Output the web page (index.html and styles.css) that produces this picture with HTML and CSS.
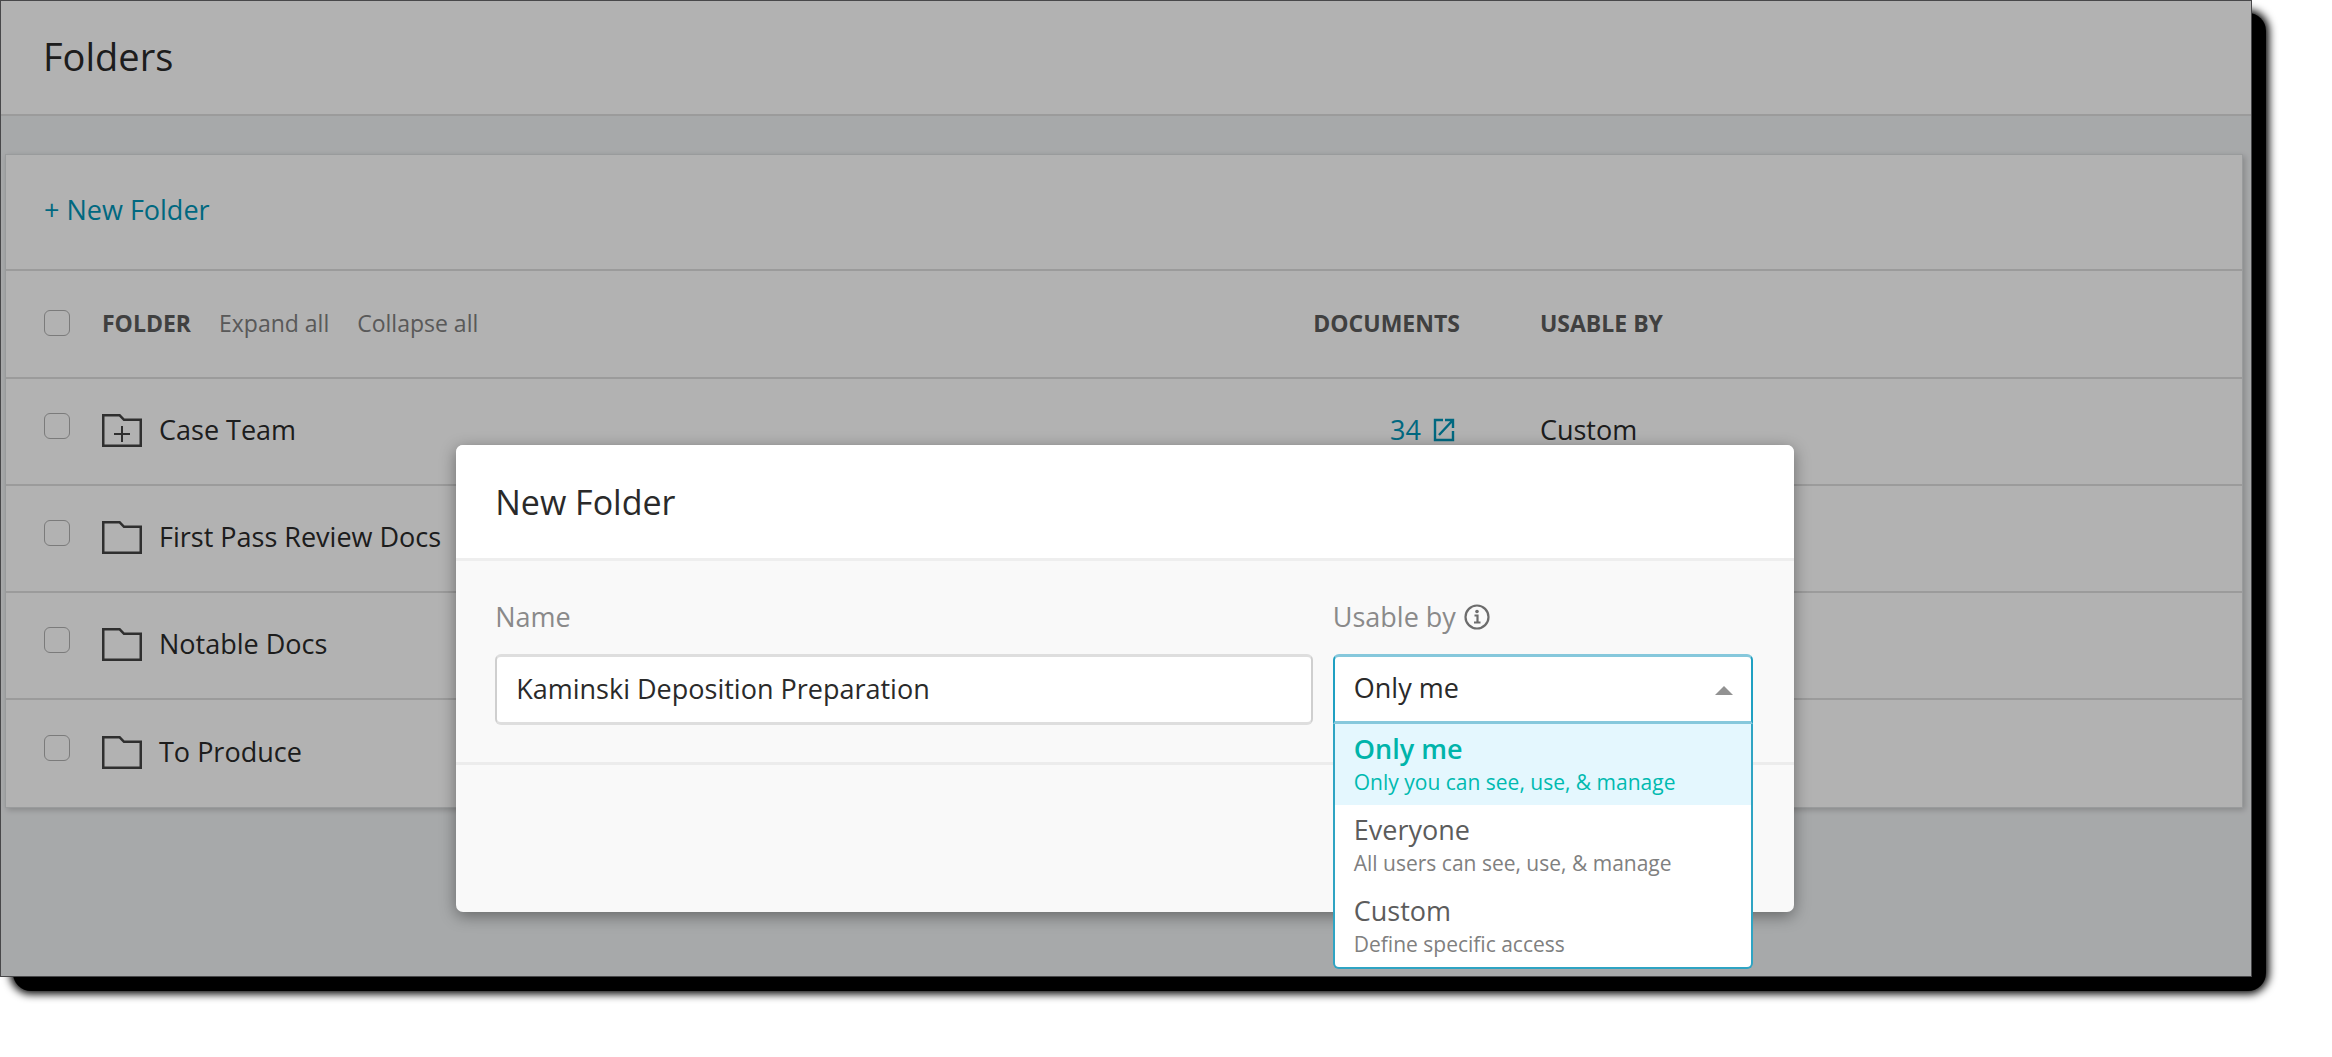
FILE: index.html
```html
<!DOCTYPE html>
<html lang="en">
<head>
<meta charset="UTF-8">
<meta name="viewport" content="width=device-width, initial-scale=1.0">
<title>Folders</title>
<link rel="stylesheet" href="styles.css">
</head>
<body>
<div class="window">
    <header class="page-header">
        <h1>Folders</h1>
    </header>

    <main class="card">
        <div class="toolbar">
            <a href="#" class="link">+ New Folder</a>
        </div>
        <table class="folders">
            <colgroup>
                <col class="col-check">
                <col class="col-folder">
                <col class="col-docs">
                <col class="col-usable">
            </colgroup>
            <thead>
                <tr>
                    <th class="check"><input type="checkbox" aria-label="Select all folders"></th>
                    <th>
                        <div class="head-folder">
                            <span>FOLDER</span>
                            <button type="button">Expand all</button>
                            <button type="button">Collapse all</button>
                        </div>
                    </th>
                    <th class="docs">DOCUMENTS</th>
                    <th>USABLE BY</th>
                </tr>
            </thead>
            <tbody>
                <tr>
                    <td class="check"><input type="checkbox" aria-label="Select Case Team"></td>
                    <td>
                        <div class="folder">
                            <svg class="folder-icon" viewBox="0 0 40 33"><path d="M1.2 1.2H17.5L22 5.8H38.8V31.8H1.2Z"/><path class="plus" d="M20 12V28M12 20H28"/></svg>
                            <span>Case Team</span>
                        </div>
                    </td>
                    <td class="docs">
                        <a href="#" class="link doc-link">34
                            <svg class="open-icon" viewBox="0 0 22 24"><path d="M10 2H2V22H20V13M12 2H20V10M20 2L6 17"/></svg>
                        </a>
                    </td>
                    <td>Custom</td>
                </tr>
                <tr>
                    <td class="check"><input type="checkbox" aria-label="Select First Pass Review Docs"></td>
                    <td>
                        <div class="folder">
                            <svg class="folder-icon" viewBox="0 0 40 33"><path d="M1.2 1.2H17.5L22 5.8H38.8V31.8H1.2Z"/></svg>
                            <span>First Pass Review Docs</span>
                        </div>
                    </td>
                    <td class="docs"></td>
                    <td></td>
                </tr>
                <tr>
                    <td class="check"><input type="checkbox" aria-label="Select Notable Docs"></td>
                    <td>
                        <div class="folder">
                            <svg class="folder-icon" viewBox="0 0 40 33"><path d="M1.2 1.2H17.5L22 5.8H38.8V31.8H1.2Z"/></svg>
                            <span>Notable Docs</span>
                        </div>
                    </td>
                    <td class="docs"></td>
                    <td></td>
                </tr>
                <tr>
                    <td class="check"><input type="checkbox" aria-label="Select To Produce"></td>
                    <td>
                        <div class="folder">
                            <svg class="folder-icon" viewBox="0 0 40 33"><path d="M1.2 1.2H17.5L22 5.8H38.8V31.8H1.2Z"/></svg>
                            <span>To Produce</span>
                        </div>
                    </td>
                    <td class="docs"></td>
                    <td></td>
                </tr>
            </tbody>
        </table>
    </main>

    <div class="overlay">
        <form class="modal" role="dialog" aria-labelledby="modalTitle">
            <div class="modal-header">
                <h2 id="modalTitle">New Folder</h2>
            </div>
            <div class="modal-body">
                <div class="field field-name">
                    <label for="name">Name</label>
                    <input type="text" id="name" value="Kaminski Deposition Preparation">
                </div>
                <div class="field field-usable">
                    <label for="usable">Usable by
                        <svg class="info-icon" viewBox="0 0 26 26"><circle cx="13" cy="13" r="11.5"/><path d="M10.5 11.5H13.5V18M10 18.5H16.5"/><circle class="dot" cx="13" cy="7.5" r="1.8"/></svg>
                    </label>
                    <div class="dropdown">
                        <select id="usable">
                            <option selected>Only me</option>
                            <option>Everyone</option>
                            <option>Custom</option>
                        </select>
                        <span class="arrow"></span>
                        <!-- open list with a description for each choice -->
                        <ul class="menu">
                            <li class="active"><b>Only me</b><small>Only you can see, use, &amp; manage</small></li>
                            <li><b>Everyone</b><small>All users can see, use, &amp; manage</small></li>
                            <li><b>Custom</b><small>Define specific access</small></li>
                        </ul>
                    </div>
                </div>
            </div>
            <div class="modal-footer"></div>
        </form>
    </div>
</div>
</body>
</html>
```

FILE: styles.css
```css
* {
    box-sizing: border-box;
}
body {
    font-family: "Open Sans", sans-serif;
    font-size: 27px;
    line-height: 36px;
    color: #2a2a2a;
    margin: 0;
    padding: 0 80px 80px 0;
    background-color: #fff;
}
h1, h2 {
    margin: 0;
    font-weight: normal;
}
input, select, button {
    font: inherit;
    color: inherit;
}
.window {
    position: relative;
    min-height: calc(100vh - 80px);
    border: 1px solid #48484a;
    background-color: #f0f2f4;
}
/* heavy drop shadow behind the window */
.window::before {
    content: "";
    position: absolute;
    z-index: -1;
    top: 12px;
    left: 12px;
    right: -15px;
    bottom: -15px;
    border-radius: 18px;
    background-color: #000;
    box-shadow: 0 0 8px 3px #000;
}
.page-header {
    background-color: #fff;
    border-bottom: 2px solid #dfdfdf;
    padding: 27px 42px 30px;
}
.page-header h1 {
    font-size: 38px;
    line-height: 56px;
}
.card {
    margin: 38px 8px 0 4px;
    background-color: #fff;
    border: 1px solid #dcdee0;
    box-shadow: 2px 2px 6px rgba(0, 0, 0, 0.2);
}
.toolbar {
    padding: 37px 38px 41px;
    border-bottom: 2px solid #dfdfdf;
}
.link {
    color: #0096b8;
    text-decoration: none;
}
.folders {
    width: 100%;
    table-layout: fixed;
    border-collapse: separate;
    border-spacing: 0;
}
.col-check {
    width: 96px;
}
.col-docs {
    width: 240px;
}
.col-usable {
    width: 31.4%;
}
.folders th, .folders td {
    height: 108px;
    padding: 0 0 2px;
    border-bottom: 2px solid #dfdfdf;
    text-align: left;
    vertical-align: middle;
}
.folders th {
    font-size: 23px;
    color: #5c5c5c;
}
.folders td {
    height: 107px;
    padding-bottom: 3px;
}
.folders tr:last-child td {
    border-bottom: 0;
}
.folders thead tr th {
    border-bottom: 2px solid #dfdfdf;
}
.folders .check {
    padding-left: 38px;
}
.folders td.check {
    padding-bottom: 12px;
}
.folders .docs {
    padding-right: 80px;
    text-align: right;
}
.folders input {
    appearance: none;
    display: block;
    width: 26px;
    height: 26px;
    margin: 0;
    border: 1px solid #b0b0b0;
    border-radius: 6px;
}
.head-folder {
    display: flex;
    gap: 28px;
}
.head-folder button {
    padding: 0;
    border: 0;
    background: none;
    color: #808080;
    font-weight: normal;
}
.folder {
    display: flex;
    align-items: center;
    gap: 17px;
}
.folder-icon {
    width: 40px;
    height: 33px;
    fill: none;
    stroke: #444;
    stroke-width: 2.6;
}
.folder-icon .plus {
    stroke-width: 2;
}
.doc-link {
    display: inline-flex;
    align-items: center;
    gap: 12px;
    margin-right: 5px;
}
.open-icon {
    width: 22px;
    height: 24px;
    fill: none;
    stroke: #0096b8;
    stroke-width: 2.4;
}
.overlay {
    position: absolute;
    inset: 0;
    padding: 444px 2px 0 0;
    background-color: rgba(0, 0, 0, 0.3);
}
.modal {
    width: 59.5%;
    margin: 0 auto;
    border-radius: 7px;
    background-color: #f9f9f9;
    box-shadow: 0 4px 16px rgba(0, 0, 0, 0.4);
}
.modal-header {
    padding: 34px 39px 33px;
    background-color: #fff;
    border-bottom: 3px solid #eee;
    border-radius: 7px 7px 0 0;
}
.modal-header h2 {
    font-size: 34px;
    line-height: 46px;
}
.modal-body {
    display: flex;
    gap: 20px;
    padding: 38px 41px 37px 39px;
    border-bottom: 3px solid #ececec;
}
.field-name {
    flex: 1;
}
.field-usable {
    width: 420px;
}
.field label {
    display: flex;
    align-items: center;
    gap: 8px;
    margin-bottom: 19px;
    color: #8a8a8a;
}
.info-icon {
    width: 26px;
    height: 26px;
    fill: none;
    stroke: #6c6c6c;
    stroke-width: 2.2;
}
.info-icon .dot {
    fill: #6c6c6c;
    stroke: none;
}
.field input, .field select {
    display: block;
    width: 100%;
    height: 71px;
    padding: 0 19px 2px;
    border: solid;
    border-width: 3px 2px;
    border-color: #dedede #cfcfcf;
    border-radius: 6px;
    background-color: #fff;
}
.dropdown {
    position: relative;
}
.field select {
    height: 70px;
    margin-bottom: 1px;
    appearance: none;
    border-color: #86c8dc #1fa0c2;
    border-radius: 6px 6px 0 0;
}
.arrow {
    position: absolute;
    top: 32px;
    right: 20px;
    border: 9px solid transparent;
    border-top: 0;
    border-bottom-color: #929292;
}
.menu {
    position: absolute;
    top: 70px;
    left: 0;
    right: 0;
    margin: 0;
    padding: 0;
    list-style: none;
    background-color: #fff;
    border: 2px solid #2fa4c3;
    border-top: 0;
    border-radius: 0 0 6px 6px;
}
.menu li {
    height: 81px;
    padding: 7px 19px 8px;
    color: #5c5c5c;
}
.menu b, .menu small {
    display: block;
    font-weight: normal;
}
.menu small {
    font-size: 21px;
    line-height: 30px;
    color: #808080;
}
.menu .active {
    background-color: #e4f7fe;
}
.menu .active b {
    color: #00b4aa;
    font-weight: 600;
}
.menu .active small {
    color: #00bab0;
}
.modal-footer {
    height: 147px;
}
```
